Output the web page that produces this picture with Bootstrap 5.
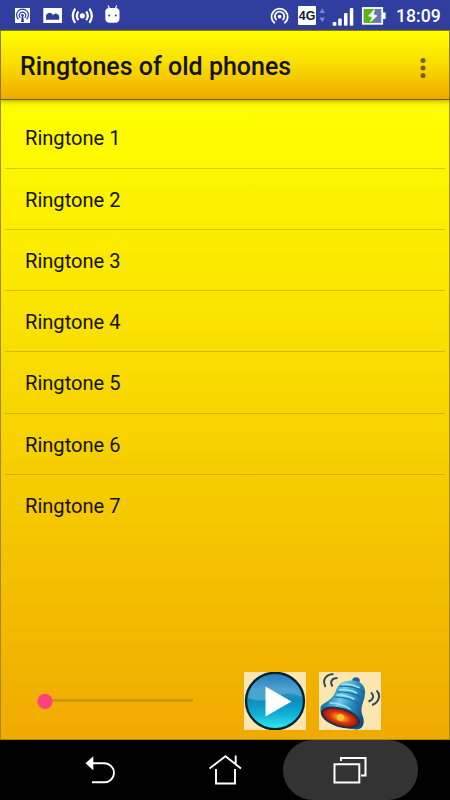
<!DOCTYPE html>
<html lang="en">
<head>
<meta charset="utf-8">
<meta name="viewport" content="width=device-width, initial-scale=1">
<title>Ringtones of old phones</title>
<link href="https://cdn.jsdelivr.net/npm/bootstrap@5.3.0/dist/css/bootstrap.min.css" rel="stylesheet">
<style>
body{font-family:Roboto,"Liberation Sans",sans-serif;width:450px;height:800px;overflow:hidden;background:#000}
svg{display:block;flex:none}
.status{height:30px;background:#303f9f;color:#fff}
.status .left-icons{padding-left:15px}
.status .right-icons{padding-right:10px}
.clock{font-size:17.6px;font-weight:500;line-height:30px;padding-top:1px;margin-left:10px;width:44px;white-space:nowrap}
.appbar{height:70px;background:linear-gradient(#ffff00,#f9dc00 50%,#f0aa00);border:1px solid #8a7a10;border-bottom-color:#6f5a08;box-shadow:0 1px 5px rgba(90,80,0,.55);padding:3px 23.5px 0 19px;z-index:1}
.appbar h1{font-size:25px;font-weight:500;line-height:30px;color:#141200;white-space:nowrap}
.appbar svg{margin-top:3px}
.content-area{height:640px;background:linear-gradient(#ffff00,#f0aa00);border:solid #a08a10;border-width:0 1px 1px;padding-top:7.4px}
.tones{margin:0 4px}
.tones .list-group-item{height:61.25px;background:transparent;border-color:rgba(120,100,0,.3);padding:2px 20px 0;font-size:20.1px;color:#141200}
.tones .list-group-item:last-child{border-bottom:0}
.controls{padding:0 68px 9px 35px}
.track{width:158px}
.pic-btn{width:62px;height:58px}
.navkeys{height:60px;background:#000}
.key-back{margin-left:84px}
.key-home{margin-left:91px}
.key-recent{width:135px;height:60px;border-radius:30px;background:#333;margin-left:40.5px}
</style>
</head>
<body class="d-flex flex-column">
<div class="status d-flex justify-content-between flex-shrink-0">
  <div class="left-icons d-flex">
    <svg width="110" height="30" viewBox="15 0 110 30">
      <rect x="15" y="8" width="15" height="15" fill="#fff"/>
      <g fill="none" stroke="#303f9f" stroke-width="1.2"><path d="M18.4 19.2a5.9 5.9 0 1 1 8.2 0"/><path d="M20.3 17.8a3.3 3.3 0 1 1 4.4 0"/></g>
      <circle cx="22.5" cy="15.3" r="1.3" fill="#303f9f"/><path d="M21.8 16h1.4l.8 6h-3z" fill="#303f9f"/>
      <rect x="43.3" y="8" width="18.7" height="15" fill="#fff"/>
      <path d="M46 19.8v-4.6q2-2.600 4-2.400 2 .2 3 2.200 2-2 3.800-1.200 2 1 2.400 2.400v3.600z" fill="#303f9f"/>
      <circle cx="82.3" cy="15.8" r="2.6" fill="#fff"/>
      <g fill="none" stroke="#fff" stroke-width="2.2"><path d="M78.400 11.500q-3.200 4.300 0 8.600M86.200 11.500q3.200 4.300 0 8.600M75.200 8.700q-4.800 7 0 14.200M89.400 8.700q4.800 7 0 14.200"/></g>
      <path d="M105.300 12.300h14.200v6q0 4.400-4.400 4.400h-5.400q-4.400 0-4.400-4.400zM105.300 11.600q0-3.600 4.200-3.600h5.800q4.200 0 4.200 3.600v1h-14.200z" fill="#fff"/>
      <path d="M108 5.500l1.600 3.300M116.800 5.500l-1.600 3.300" stroke="#fff" stroke-width="1.200"/>
      <circle cx="109.200" cy="15.500" r="1" fill="#303f9f"/><circle cx="115.800" cy="15.500" r="1" fill="#303f9f"/>
    </svg>
  </div>
  <div class="right-icons d-flex">
    <svg width="118" height="30" viewBox="268 0 118 30">
      <g fill="none" stroke="#fff" stroke-width="1.800"><path d="M274.800 23.300a8.100 8.100 0 1 1 9.600 0"/><path d="M276.600 20a4.700 4.700 0 1 1 6 0"/></g>
      <circle cx="279.600" cy="16.600" r="1.900" fill="#fff"/>
      <rect x="298" y="6" width="18" height="19" rx="1" fill="#fff"/>
      <text x="307" y="20" text-anchor="middle" font-size="13" font-weight="700" textLength="16.500" lengthAdjust="spacingAndGlyphs" fill="#111936" font-family="Liberation Sans, sans-serif">4G</text>
      <path d="M319.500 13l2.800-4.700 2.800 4.700zM319.500 17.500l2.800 4.700 2.800-4.700z" fill="#7c86c3"/>
      <g fill="#fff"><rect x="332.700" y="22" width="3.700" height="3.800" rx="1"/><rect x="338.200" y="18.500" width="3.500" height="7.300" rx="1"/><rect x="344" y="13" width="3.500" height="12.800" rx="1"/><rect x="349.800" y="8" width="3.500" height="17.800" rx="1"/></g>
      <rect x="362.800" y="8" width="19.400" height="15.800" fill="#6977ac" stroke="#fff" stroke-width="1.800"/>
      <rect x="363.800" y="9" width="10" height="13.800" fill="#58b51b"/><rect x="382.600" y="12.500" width="3" height="6.500" fill="#fff"/>
      <path d="M374.500 9.500l-6 6.500 4 .8-2.200 5 6.700-6-3.700-1.200z" fill="#fff" stroke="#fff" stroke-width=".7"/>
    </svg>
    <span class="clock">18:09</span>
  </div>
</div>

<header class="appbar position-relative d-flex align-items-center justify-content-between flex-shrink-0">
  <h1 class="m-0">Ringtones of old phones</h1>
  <svg width="6" height="20" viewBox="0 0 6 20" fill="#75600a" role="img" aria-label="More options"><circle cx="3" cy="2.500" r="2.500"/><circle cx="3" cy="10" r="2.500"/><circle cx="3" cy="17.500" r="2.500"/></svg>
</header>

<main class="content-area d-flex flex-column flex-shrink-0">
  <ul class="tones list-group list-group-flush">
    <li class="list-group-item d-flex align-items-center">Ringtone 1</li>
    <li class="list-group-item d-flex align-items-center">Ringtone 2</li>
    <li class="list-group-item d-flex align-items-center">Ringtone 3</li>
    <li class="list-group-item d-flex align-items-center">Ringtone 4</li>
    <li class="list-group-item d-flex align-items-center">Ringtone 5</li>
    <li class="list-group-item d-flex align-items-center">Ringtone 6</li>
    <li class="list-group-item d-flex align-items-center">Ringtone 7</li>
  </ul>
  <div class="controls d-flex align-items-center justify-content-between mt-auto">
    <svg class="track" width="158" height="20" viewBox="0 0 158 20"><rect x="9" y="8.200" width="148" height="2.600" fill="#cc9500"/><circle cx="9" cy="10.300" r="7.600" fill="#ff4081"/></svg>
    <div class="d-flex">
      <svg class="pic-btn" viewBox="0 0 62 58" role="img" aria-label="Play">
        <defs>
          <linearGradient id="orb" x1="0" y1="0" x2="0" y2="1"><stop offset="0" stop-color="#1f78b4"/><stop offset=".3" stop-color="#3294c8"/><stop offset=".5" stop-color="#0d8cc0"/><stop offset=".75" stop-color="#12b2d8"/><stop offset="1" stop-color="#36eef5"/></linearGradient>
          <linearGradient id="gloss" x1="0" y1="0" x2="0" y2="1"><stop offset="0" stop-color="#fff" stop-opacity=".03"/><stop offset="1" stop-color="#fff" stop-opacity=".22"/></linearGradient>
        </defs>
        <rect width="62" height="58" fill="#fbe6b0"/>
        <ellipse cx="31" cy="29" rx="29" ry="28.200" fill="url(#orb)" stroke="#06202f" stroke-width="2.300"/>
        <path d="M4 26C7 10 18 3 31 3s24 8 27 22Q44 18 31 25T4 26z" fill="url(#gloss)"/>
        <path d="M21.500 14.500L47.500 29.500 21.500 44.500z" fill="#fff"/>
      </svg>
      <svg class="pic-btn" style="margin-left:13px" viewBox="0 0 62 58" role="img" aria-label="Set as ringtone">
        <defs>
          <linearGradient id="metal" gradientUnits="userSpaceOnUse" x1="10" y1="22" x2="48" y2="36"><stop offset="0" stop-color="#1c79ac"/><stop offset=".3" stop-color="#6ccbe8"/><stop offset=".6" stop-color="#2a91c2"/><stop offset="1" stop-color="#0f4c80"/></linearGradient>
          <radialGradient id="ember"><stop offset="0" stop-color="#ffdc54"/><stop offset=".25" stop-color="#fb8a1c"/><stop offset=".55" stop-color="#d8380c"/><stop offset=".8" stop-color="#b32208"/><stop offset="1" stop-color="#5c1510"/></radialGradient>
        </defs>
        <rect width="62" height="58" fill="#fbe6b0"/>
        <ellipse cx="37" cy="8.800" rx="3.800" ry="3.600" fill="#1c628b"/>
        <path d="M1.500 35C4 30 12 30 16.500 20 18 14 23 8 33 8.500 41 9 47 13 46 22 45 31 40 36 44 45 46 51 44 57 38 57.500 24 57 4 48 1.500 40z" fill="url(#metal)"/>
        <g fill="none" stroke="#1b6c9b" stroke-width="1.200"><path d="M20.500 14.500q14-2 25.500 6.500M18 20q14-1 27 7M15.500 25q14 0 27 8"/></g>
        <g fill="none" stroke="#a3e3f3" stroke-width="1.500" stroke-linecap="round"><path d="M23 12.500q9-1 17 3M20.500 18q10-1 17 3M18 23q10 0 17 4M11 31q11 0 20 6"/></g>
        <ellipse cx="21.500" cy="45.500" rx="19.500" ry="8.800" transform="rotate(17 21.500 45.500)" fill="url(#ember)" stroke="#0e365b" stroke-width="1.500"/>
        <circle cx="21.500" cy="45.500" r="3.500" fill="#ffc238"/>
        <g fill="none" stroke="#2c4a5e" stroke-width="2"><path d="M14.500 2C6.500 2.500 3 8 6.500 15M18.500 6C13 6 10.500 9.500 13.500 14.500M57.500 18.500c4.500 4 3 12-4.500 14.500M52 20.500c3.500 3 2.500 7.500-2.500 9"/></g>
      </svg>
    </div>
  </div>
</main>

<nav class="navkeys d-flex align-items-center flex-shrink-0" aria-label="System navigation">
  <svg class="key-back" width="33" height="60" viewBox="84 0 33 60"><path d="M92 23.300h12.500a9.500 9.500 0 0 1 0 19H92" fill="none" stroke="#fff" stroke-width="1.900"/><path d="M85.500 23.300l7.800-7v14z" fill="#fff"/></svg>
  <svg class="key-home" width="34" height="60" viewBox="208 0 34 60"><path d="M209.500 28.500l16-12.300 15.500 12.300M235.700 24v-8.500M216 29v14.500h19V29" fill="none" stroke="#fff" stroke-width="1.900"/></svg>
  <div class="key-recent d-flex align-items-center justify-content-center">
    <svg width="34" height="28" viewBox="333 16 34 28"><path d="M341 21v-3h24.500v17.500H361M334.500 24.300h24.800v18.200h-24.800z" fill="none" stroke="#fff" stroke-width="2"/></svg>
  </div>
</nav>
<script src="https://cdn.jsdelivr.net/npm/bootstrap@5.3.0/dist/js/bootstrap.bundle.min.js"></script>
</body>
</html>
